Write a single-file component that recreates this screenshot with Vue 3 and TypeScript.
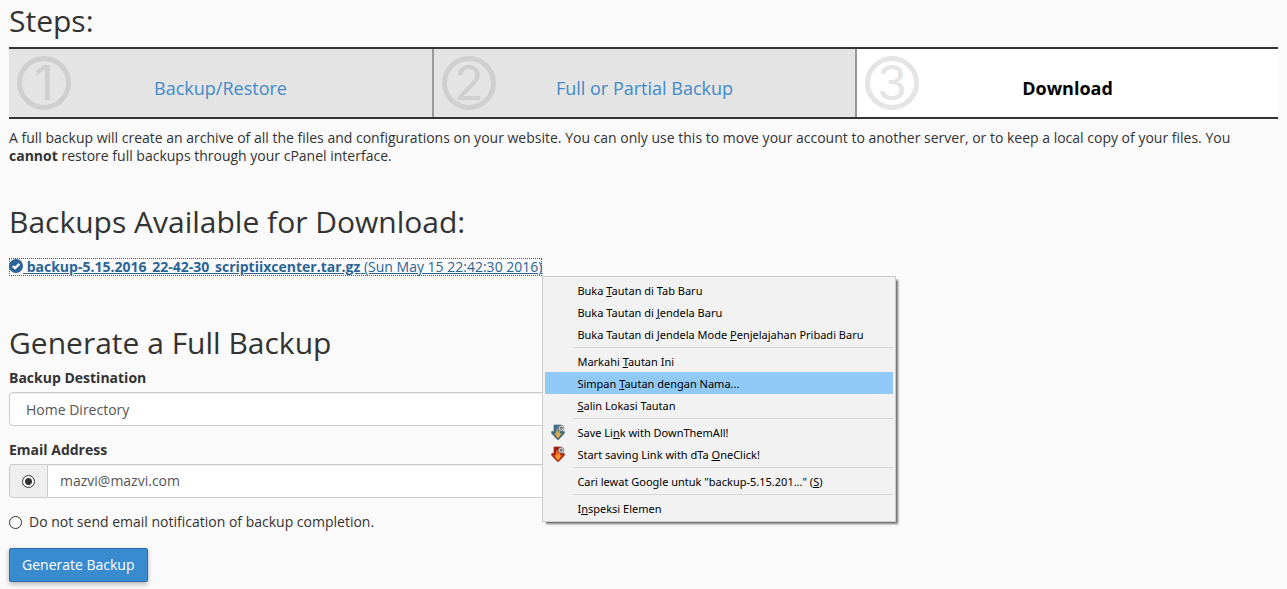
<script setup lang="ts">
import { ref } from 'vue'

interface Step {
  number: number
  label: string
  current?: boolean
}

interface MenuItem {
  before: string
  key: string
  after: string
  icon?: 'blue' | 'red'
  active?: boolean
}

const steps: Step[] = [
  { number: 1, label: 'Backup/Restore' },
  { number: 2, label: 'Full or Partial Backup' },
  { number: 3, label: 'Download', current: true },
]

const menuGroups: MenuItem[][] = [
  [
    { before: 'Buka ', key: 'T', after: 'autan di Tab Baru' },
    { before: 'Buka Tautan di ', key: 'J', after: 'endela Baru' },
    { before: 'Buka Tautan di Jendela Mode ', key: 'P', after: 'enjelajahan Pribadi Baru' },
  ],
  [
    { before: 'Markahi ', key: 'T', after: 'autan Ini' },
    { before: 'Simpan ', key: 'T', after: 'autan dengan Nama...', active: true },
    { before: '', key: 'S', after: 'alin Lokasi Tautan' },
  ],
  [
    { before: 'Save Li', key: 'n', after: 'k with DownThemAll!', icon: 'blue' },
    { before: 'Start saving Link with dTa ', key: 'O', after: 'neClick!', icon: 'red' },
  ],
  [{ before: 'Cari lewat Google untuk "backup-5.15.201..." (', key: 'S', after: ')' }],
  [{ before: 'I', key: 'n', after: 'speksi Elemen' }],
]

const destination = ref('home')
const email = ref('mazvi@mazvi.com')
const notify = ref('yes')
</script>

<template>
  <main class="page">
    <h2>Steps:</h2>
    <ol class="steps">
      <li v-for="step in steps" :key="step.number" class="step" :class="{ current: step.current }">
        <span class="badge">{{ step.number }}</span>
        <strong v-if="step.current" class="step-label">{{ step.label }}</strong>
        <a v-else class="step-label" href="#">{{ step.label }}</a>
      </li>
    </ol>

    <p class="intro">
      A full backup will create an archive of all the files and configurations on your website. You can only use this to
      move your account to another server, or to keep a local copy of your files. You <strong>cannot</strong> restore
      full backups through your cPanel interface.
    </p>

    <h2 class="available">Backups Available for Download:</h2>
    <div class="download">
      <a class="file" href="#">
        <svg class="check" viewBox="0 0 14 14" aria-hidden="true">
          <circle cx="7" cy="7" r="7" fill="#2a6496" />
          <path d="M3.7 7.1 6 9.2 10.4 4.9" fill="none" stroke="#fafafa" stroke-width="2.4" />
        </svg>
        <span class="file-text"
          >&nbsp;<strong>backup-5.15.2016_22-42-30_scriptiixcenter.tar.gz</strong> (Sun May 15 22:42:30 2016)</span
        >
      </a>

      <div class="menu" role="menu">
        <div v-for="(group, g) in menuGroups" :key="g" class="group">
          <button
            v-for="item in group"
            :key="item.before + item.key"
            class="item"
            :class="{ active: item.active }"
            type="button"
            role="menuitem"
          >
            <span class="item-icon">
              <svg v-if="item.icon" viewBox="0 0 16 16" aria-hidden="true">
                <defs>
                  <linearGradient :id="'body-' + item.icon" x1="0" y1="0" x2="0" y2="1">
                    <stop offset="0" :stop-color="item.icon === 'blue' ? '#2f7ba6' : '#a81208'" />
                    <stop offset="1" :stop-color="item.icon === 'blue' ? '#3f5d68' : '#c2300c'" />
                  </linearGradient>
                  <linearGradient :id="'core-' + item.icon" x1="0" y1="0" x2="0" y2="1">
                    <stop offset="0" :stop-color="item.icon === 'blue' ? '#4b87a0' : '#d43a12'" />
                    <stop offset="0.5" :stop-color="item.icon === 'blue' ? '#d3a955' : '#f58a25'" />
                    <stop offset="1" stop-color="#f6b13c" />
                  </linearGradient>
                </defs>
                <path
                  d="M4 1h7.5v6.5h2.8v1.8L8.8 15.4H7.2L1.7 9.3V7.5H4z"
                  :fill="'url(#body-' + item.icon + ')'"
                  :stroke="item.icon === 'blue' ? '#5b7480' : '#9c3a28'"
                  stroke-width="0.8"
                />
                <path d="M6 4h4v5.2h1.8L8 14.4 4.2 9.2H6z" :fill="'url(#core-' + item.icon + ')'" />
                <circle cx="11.2" cy="4.2" r="2.8" fill="#e4e4e4" stroke="#777" stroke-width="0.8" />
                <circle cx="11.2" cy="4.2" r="1.1" fill="#bbb" stroke="#444" stroke-width="0.8" />
              </svg>
            </span>
            <span class="item-text">{{ item.before }}<u>{{ item.key }}</u>{{ item.after }}</span>
          </button>
        </div>
      </div>
    </div>

    <h2 class="generate">Generate a Full Backup</h2>
    <form class="form" @submit.prevent>
      <label class="field-label" for="destination">Backup Destination</label>
      <select id="destination" v-model="destination" class="control select">
        <option value="home">Home Directory</option>
      </select>

      <label class="field-label second" for="email">Email Address</label>
      <div class="input-group">
        <span class="addon">
          <input v-model="notify" type="radio" name="notify" value="yes" aria-label="Send email notification" />
        </span>
        <input id="email" v-model="email" class="control email" type="text" />
      </div>

      <label class="silent">
        <input v-model="notify" type="radio" name="notify" value="no" />
        <span>Do not send email notification of backup completion.</span>
      </label>

      <button class="submit" type="submit">Generate Backup</button>
    </form>
  </main>
</template>

<style>
body {
  background: #fafafa;
}
</style>

<style scoped>
* {
  box-sizing: border-box;
}

.page {
  padding: 4px 9px 7px;
  color: #333;
  font: 14px/18px 'Open Sans', sans-serif;
}

h2 {
  margin: 0;
  font-size: 30px;
  line-height: 34px;
  font-weight: 400;
}

.steps {
  display: grid;
  grid-template-columns: repeat(3, 1fr);
  margin: 9px 0 0;
  padding: 0;
  list-style: none;
  border-top: 2px solid #333;
  border-bottom: 2px solid #333;
}

.step {
  display: grid;
  align-items: center;
  padding: 7px 0;
  background: #e4e4e4;
}

.step + .step {
  border-left: 2px solid #999;
}

.step.current {
  background: #fff;
}

.badge,
.step-label {
  grid-area: 1 / 1;
}

.badge {
  width: 54px;
  height: 54px;
  margin-left: 8px;
  border: 5px solid #cfcfcf;
  border-radius: 50%;
  color: #cfcfcf;
  font: 400 48px/44px Inter, sans-serif;
  text-align: center;
}

.current .badge {
  border-color: #e5e5e5;
  color: #e5e5e5;
}

.step-label {
  padding-top: 10px;
  color: #428bca;
  font-size: 18px;
  line-height: 24px;
  text-align: center;
  text-decoration: none;
}

.current .step-label {
  color: #000;
}

.intro {
  margin: 10px 0 0;
}

.available {
  margin-top: 40px;
}

.download {
  position: relative;
  width: fit-content;
  margin-top: 19px;
}

.file {
  display: flex;
  align-items: center;
  height: 18px;
  color: #2a6496;
  text-decoration: none;
  outline: 1px dotted #2a6496;
  outline-offset: -1px;
}

.file-text {
  text-decoration: underline;
}

.check {
  width: 14px;
  height: 14px;
  margin-bottom: 2px;
}

.menu {
  position: absolute;
  z-index: 1;
  top: 100%;
  left: 100%;
  width: 354px;
  padding: 2px;
  border: 1px solid #ccc;
  background: #f2f2f2;
  box-shadow: 3px 3px 2px -1px rgba(0, 0, 0, 0.55);
}

.group + .group {
  padding-top: 5px;
  background: linear-gradient(#d7d7d7, #d7d7d7) 28px 2px / 100% 1px no-repeat;
}

.item {
  display: flex;
  align-items: center;
  width: 100%;
  height: 22px;
  padding: 0;
  border: 0;
  background: transparent;
  color: #000;
  font: 11px/20px 'Noto Sans', sans-serif;
  white-space: pre;
}

.item.active {
  background: #91c9f7;
}

.item-icon {
  display: flex;
  width: 32px;
  padding-left: 5px;
}

.item-icon svg {
  width: 16px;
  height: 16px;
}

.item-text {
  padding-top: 2px;
}

.generate {
  margin-top: 50px;
}

.form {
  width: 50%;
  margin-top: 9px;
}

.field-label {
  display: block;
  margin-bottom: 5px;
  font-weight: 700;
}

.second {
  margin-top: 15px;
}

.control {
  display: block;
  width: 100%;
  height: 34px;
  padding: 0 12px;
  border: 1px solid #ccc;
  border-radius: 4px;
  background: #fff;
  box-shadow: inset 0 1px 1px rgba(0, 0, 0, 0.075);
  color: #555;
  font: inherit;
}

.select {
  appearance: none;
  padding: 1px 16px 0;
}

.input-group {
  display: flex;
}

.addon {
  display: flex;
  align-items: center;
  padding: 0 12px;
  border: 1px solid #ccc;
  border-right: 0;
  border-radius: 4px 0 0 4px;
  background: #eee;
}

.email {
  flex: 1;
  padding-bottom: 2px;
  border-radius: 0 4px 4px 0;
}

input[type='radio'] {
  appearance: none;
  flex: none;
  width: 13px;
  height: 13px;
  margin: 0;
  border: 1px solid #333;
  border-radius: 50%;
  background: #fff;
}

input[type='radio']:checked {
  background: radial-gradient(circle, #333 3px, #fff 4px);
}

.silent {
  display: flex;
  align-items: center;
  gap: 7px;
  width: fit-content;
  margin-top: 15px;
}

.submit {
  height: 34px;
  margin-top: 17px;
  padding: 0 12px;
  border: 1px solid #2e6da4;
  border-radius: 2px;
  background: #398bd0;
  box-shadow: 0 2px 5px rgba(0, 0, 0, 0.3);
  color: #fff;
  font: inherit;
}
</style>
